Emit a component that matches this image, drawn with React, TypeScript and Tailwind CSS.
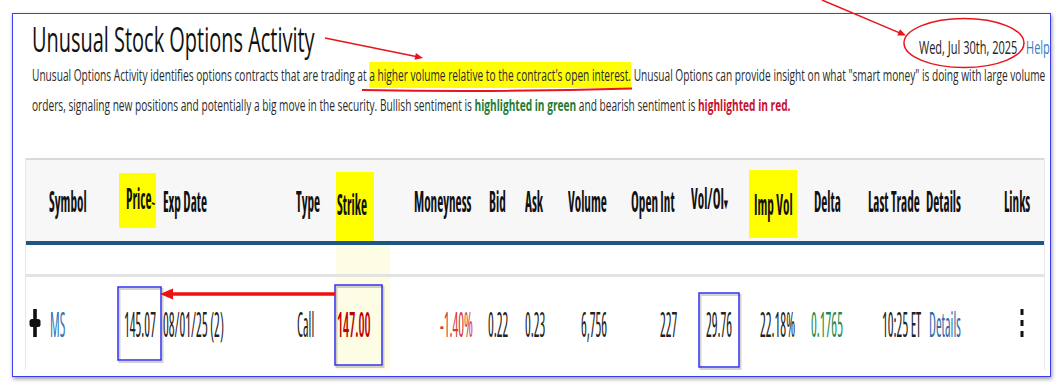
import type { ReactNode } from "react"

// squeezed text: the reference is a horizontally compressed capture
function T({ c, children }: { c: string; children: ReactNode }) {
  return <span className={`inline-block whitespace-nowrap origin-left ${c}`}>{children}</span>
}

const H = "font-bold text-[28px] leading-[28px] font-stretch-condensed scale-x-[0.47] text-[#111]"
const R = "text-[34px] leading-[34px] font-stretch-condensed scale-x-[0.40]"
const COLS =
  "grid grid-cols-[20px_73px_42px_130px_45px_65px_80px_35px_40px_55px_67px_63px_60px_60px_62px_78px_45px]"

function PlusIcon() {
  return (
    <svg width="12" height="28" viewBox="0 0 12 28">
      <rect x="4.2" y="0" width="3.6" height="28" fill="#111" />
      <rect x="0.5" y="10" width="11" height="8" rx="2.5" fill="#111" />
    </svg>
  )
}

function MoreIcon() {
  return (
    <svg width="4" height="28" viewBox="0 0 4 28">
      <rect x="0.5" y="0" width="3" height="6" fill="#111" />
      <rect x="0.5" y="11" width="3" height="6" fill="#111" />
      <rect x="0.5" y="22" width="3" height="6" fill="#111" />
    </svg>
  )
}

function Marks() {
  return (
    <svg className="absolute inset-0 pointer-events-none" width="1062" height="385" viewBox="0 0 1062 385">
      {/* title -> highlight */}
      <line x1="325" y1="38" x2="416" y2="56.6" stroke="#e8141c" strokeWidth="1.5" />
      <polygon points="423,58 415.9,53 414.5,59.8" fill="#e8141c" />
      <path d="M362 90 Q497 92.5 632 88.5" stroke="#e8141c" strokeWidth="2" fill="none" />
      {/* date */}
      <line x1="822" y1="0" x2="899" y2="32.6" stroke="#e8141c" strokeWidth="1.5" />
      <polygon points="906,35.5 900,29.2 897.2,35.6" fill="#e8141c" />
      <ellipse cx="964" cy="43" rx="60" ry="24.5" stroke="#e8141c" strokeWidth="1.5" fill="none" />
      {/* boxes */}
      <g stroke="rgba(0,0,0,0.18)" strokeWidth="2" fill="none">
        <rect x="119.5" y="289" width="43" height="73" />
        <rect x="336.5" y="287" width="47" height="80" />
        <rect x="700.5" y="295" width="40" height="74" />
      </g>
      <g stroke="#2f2ff2" strokeWidth="1.5" fill="none">
        <rect x="118" y="287" width="43" height="73" />
        <rect x="335" y="285" width="47" height="80" />
        <rect x="699" y="293" width="40" height="74" />
      </g>
      <line x1="335" y1="294" x2="172" y2="294" stroke="#ee1111" strokeWidth="3.5" />
      <polygon points="160,294 173,288.5 173,299.5" fill="#ee1111" />
    </svg>
  )
}

export default function App() {
  return (
    <div className="relative w-[1062px] h-[385px] bg-white overflow-hidden font-['Open_Sans',sans-serif]">
      <div className="pt-[13px] pl-[12px]">
        <div className="w-[1039px] h-[364px] border border-[#3d3df2] shadow-[1px_2px_4px_rgba(0,0,0,0.4)] overflow-hidden">
          <div className="flex justify-between pl-[19px] pt-[7px] leading-none">
            <div className="text-[35px] leading-[35px] h-[35px]">
              <T c="scale-x-[0.57] text-[#111]">Unusual Stock Options Activity</T>
            </div>
            <div className="flex mt-[17px] h-[19px] text-[19px] leading-[19px]">
              <div className="w-[107px]">
                <T c="scale-x-[0.58] text-[#222]">Wed, Jul 30th, 2025</T>
              </div>
              <div className="w-[24px]">
                <T c="scale-x-[0.58] text-[#3a7bc0]">Help</T>
              </div>
            </div>
          </div>

          <div className="pl-[19px] mt-[3px] text-[16px] leading-[30px] text-[#2b2b2b]">
            <div className="h-[30px]">
              <T c="scale-x-[0.634]">
                Unusual Options Activity identifies options contracts that are trading at{" "}
                <span className="bg-[#ffff00] py-[2px]">a higher volume relative to the contract's open interest.</span>{" "}
                Unusual Options can provide insight on what "smart money" is doing with large volume
              </T>
            </div>
            <div className="h-[30px]">
              <T c="scale-x-[0.634]">
                orders, signaling new positions and potentially a big move in the security. Bullish sentiment is{" "}
                <b className="text-[#1e7b34]">highlighted in green</b> and bearish sentiment is{" "}
                <b className="text-[#c8102e]">highlighted in red.</b>
              </T>
            </div>
          </div>

          <div className="ml-[12px] mt-[38px] w-[1020px] border-x border-[#e8e8e8] leading-none">
            <div className={`${COLS} h-[87px] items-center bg-[#f7f7f7] border-t-2 border-t-[#d9d9d9] border-b-4 border-b-[#1d5585]`}>
              <div />
              <div className="pl-[3px]"><T c={H}>Symbol</T></div>
              <div className="w-[37px] h-[55px] bg-[#ffff00] flex items-center pl-[7px]">
                <T c={H}>Price<span className="text-[16px]">~</span></T>
              </div>
              <div className="pl-[2px]"><T c={H}>Exp Date</T></div>
              <div className="pl-[5px]"><T c={H}>Type</T></div>
              <div className="self-end w-[38px] h-[69px] bg-[#ffff00] flex items-center pl-[1px] pb-[6px]">
                <T c={H}>Strike</T>
              </div>
              <div className="pl-[13px]"><T c={H}>Moneyness</T></div>
              <div className="pl-[8px]"><T c={H}>Bid</T></div>
              <div className="pl-[9px]"><T c={H}>Ask</T></div>
              <div className="pl-[12px]"><T c={H}>Volume</T></div>
              <div className="pl-[20px]"><T c={H}>Open Int</T></div>
              <div className="pl-[13px]">
                <T c={H}>Vol/OI<span className="text-[16px]">▾</span></T>
              </div>
              <div className="self-start mt-[10px] ml-[8px] w-[48px] h-[68px] bg-[#ffff00] flex items-center pl-[5px]">
                <T c={H}>Imp Vol</T>
              </div>
              <div className="pl-[13px]"><T c={H}>Delta</T></div>
              <div className="pl-[7px]"><T c={H}>Last Trade</T></div>
              <div className="pl-[3px]"><T c={H}>Details</T></div>
              <div className="pl-[3px]"><T c={H}>Links</T></div>
            </div>

            <div className={`${COLS} h-[29px]`}>
              <div className="col-start-6 w-[54px] bg-[#fdfde6]" />
            </div>

            <div className={`${COLS} h-[96px] items-center border-t-[3px] border-t-[#e3e3e3] text-[#222]`}>
              <div className="pl-[3px] pb-[2px] flex"><PlusIcon /></div>
              <div className="pl-[4px] text-[#3573b5]"><T c={R}>MS</T></div>
              <div className="pl-[5px]"><T c={R}>145.07</T></div>
              <div className="pl-[2px]"><T c={R}>08/01/25 (2)</T></div>
              <div className="pl-[6px]"><T c={R}>Call</T></div>
              <div className="self-stretch w-[54px] bg-[#fdfde6] flex items-center pl-[1px] text-[#c00000]">
                <T c={`${R} font-semibold`}>147.00</T>
              </div>
              <div className="pl-[39px] text-[#d43a3a]"><T c={R}>-1.40%</T></div>
              <div className="pl-[7px]"><T c={R}>0.22</T></div>
              <div className="pl-[9px]"><T c={R}>0.23</T></div>
              <div className="pl-[25px]"><T c={R}>6,756</T></div>
              <div className="pl-[49px]"><T c={R}>227</T></div>
              <div className="pl-[28px]"><T c={R}>29.76</T></div>
              <div className="pl-[19px]"><T c={R}>22.18%</T></div>
              <div className="pl-[10px] text-[#1f8a4c]"><T c={R}>0.1765</T></div>
              <div className="pl-[21px]"><T c={R}>10:25 ET</T></div>
              <div className="pl-[6px] text-[#2f6aa8]"><T c={R}>Details</T></div>
              <div className="pl-[19px] pb-[2px] flex"><MoreIcon /></div>
            </div>
          </div>
        </div>
      </div>
      <Marks />
    </div>
  )
}
